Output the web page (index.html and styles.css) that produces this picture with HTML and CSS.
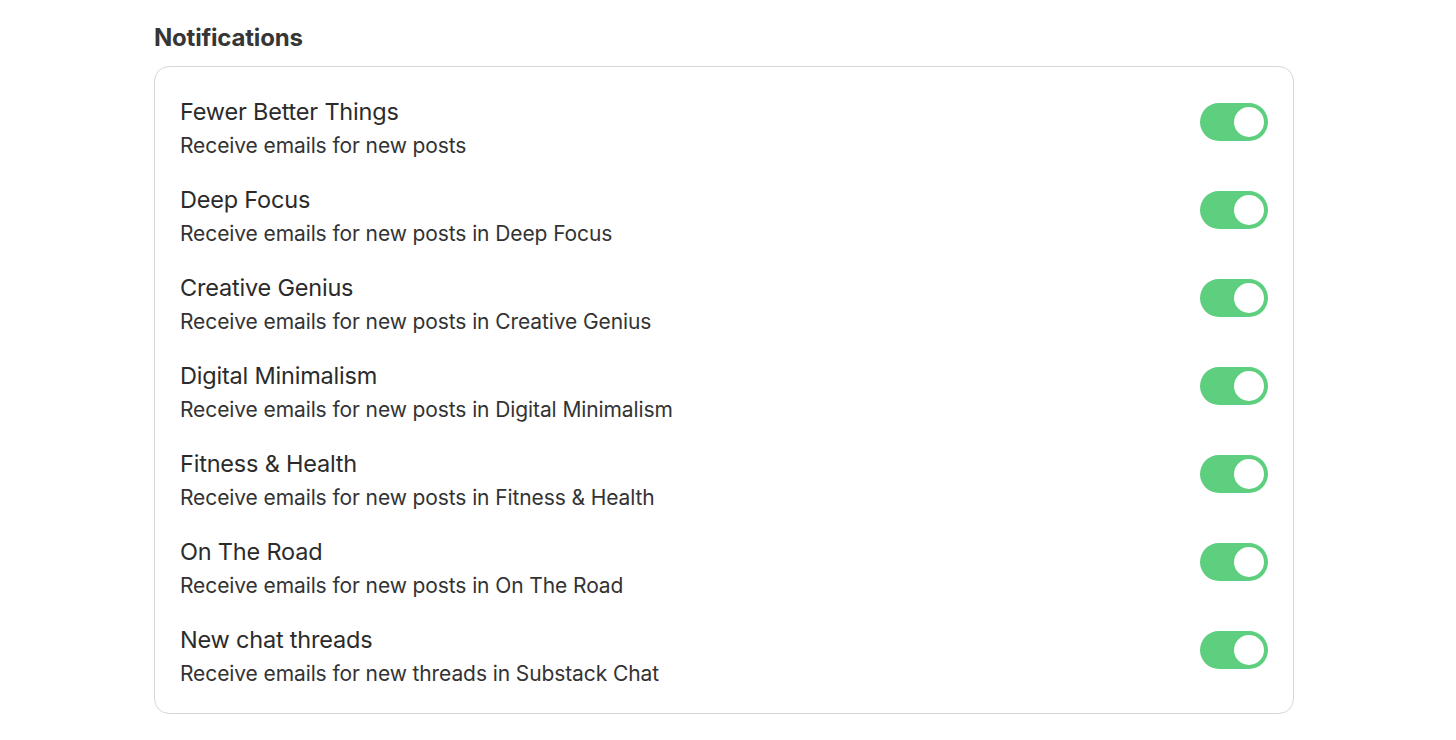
FILE: index.html
```html
<!DOCTYPE html>
<html>
	<head>
		<title>Notifications</title>
		<link rel="stylesheet" href="styles.css">
	</head>
	<body>
		<div class="page">
			<h2 class="section-title">Notifications</h2>
			<div class="card">
				<div class="row">
					<div class="text">
						<div class="name">Fewer Better Things</div>
						<div class="desc">Receive emails for new posts</div>
					</div>
					<span class="toggle on"><span class="knob"></span></span>
				</div>
				<div class="row">
					<div class="text">
						<div class="name">Deep Focus</div>
						<div class="desc">Receive emails for new posts in Deep Focus</div>
					</div>
					<span class="toggle on"><span class="knob"></span></span>
				</div>
				<div class="row">
					<div class="text">
						<div class="name">Creative Genius</div>
						<div class="desc">Receive emails for new posts in Creative Genius</div>
					</div>
					<span class="toggle on"><span class="knob"></span></span>
				</div>
				<div class="row">
					<div class="text">
						<div class="name">Digital Minimalism</div>
						<div class="desc">Receive emails for new posts in Digital Minimalism</div>
					</div>
					<span class="toggle on"><span class="knob"></span></span>
				</div>
				<div class="row">
					<div class="text">
						<div class="name">Fitness &amp; Health</div>
						<div class="desc">Receive emails for new posts in Fitness &amp; Health</div>
					</div>
					<span class="toggle on"><span class="knob"></span></span>
				</div>
				<div class="row">
					<div class="text">
						<div class="name">On The Road</div>
						<div class="desc">Receive emails for new posts in On The Road</div>
					</div>
					<span class="toggle on"><span class="knob"></span></span>
				</div>
				<div class="row">
					<div class="text">
						<div class="name">New chat threads</div>
						<div class="desc">Receive emails for new threads in Substack Chat</div>
					</div>
					<span class="toggle on"><span class="knob"></span></span>
				</div>
			</div>
		</div>
	</body>
</html>
```

FILE: styles.css
```css
body {
	margin:0;
	background:#fff;
	color:#2e2e2e;
	font-family:Inter, "Noto Sans", Arial, sans-serif;
}
.page {
	width:1140px;
	margin-left:154px;
	padding-top:23px;
}
.section-title {
	margin:0 0 13px 0;
	font-size:24px;
	line-height:30px;
	font-weight:700;
	color:#363636;
	letter-spacing:-0.2px;
}
.card {
	border:1px solid #d6d6d6;
	border-radius:15px;
	padding:29px 25px 25px 25px;
	display:flex;
	flex-direction:column;
	gap:24px;
}
.row {
	display:flex;
	justify-content:space-between;
	align-items:flex-start;
}
.name {
	font-size:23.5px;
	line-height:32px;
	font-weight:400;
	color:#2b2b2b;
	letter-spacing:-0.2px;
}
.desc {
	margin-top:4px;
	font-size:21px;
	line-height:28px;
	color:#333;
	letter-spacing:-0.1px;
}
.toggle {
	margin-top:7px;
	width:68px;
	height:38px;
	border-radius:19px;
	background:#e2e2e2;
	display:flex;
	align-items:center;
	box-sizing:border-box;
	padding:2px;
}
.toggle.on {
	background:#5dcf7f;
	justify-content:flex-end;
}
.knob {
	width:34px;
	height:34px;
	border-radius:50%;
	background:#fff;
	box-sizing:border-box;
	border:2.5px solid #5dcf7f;
}
```
